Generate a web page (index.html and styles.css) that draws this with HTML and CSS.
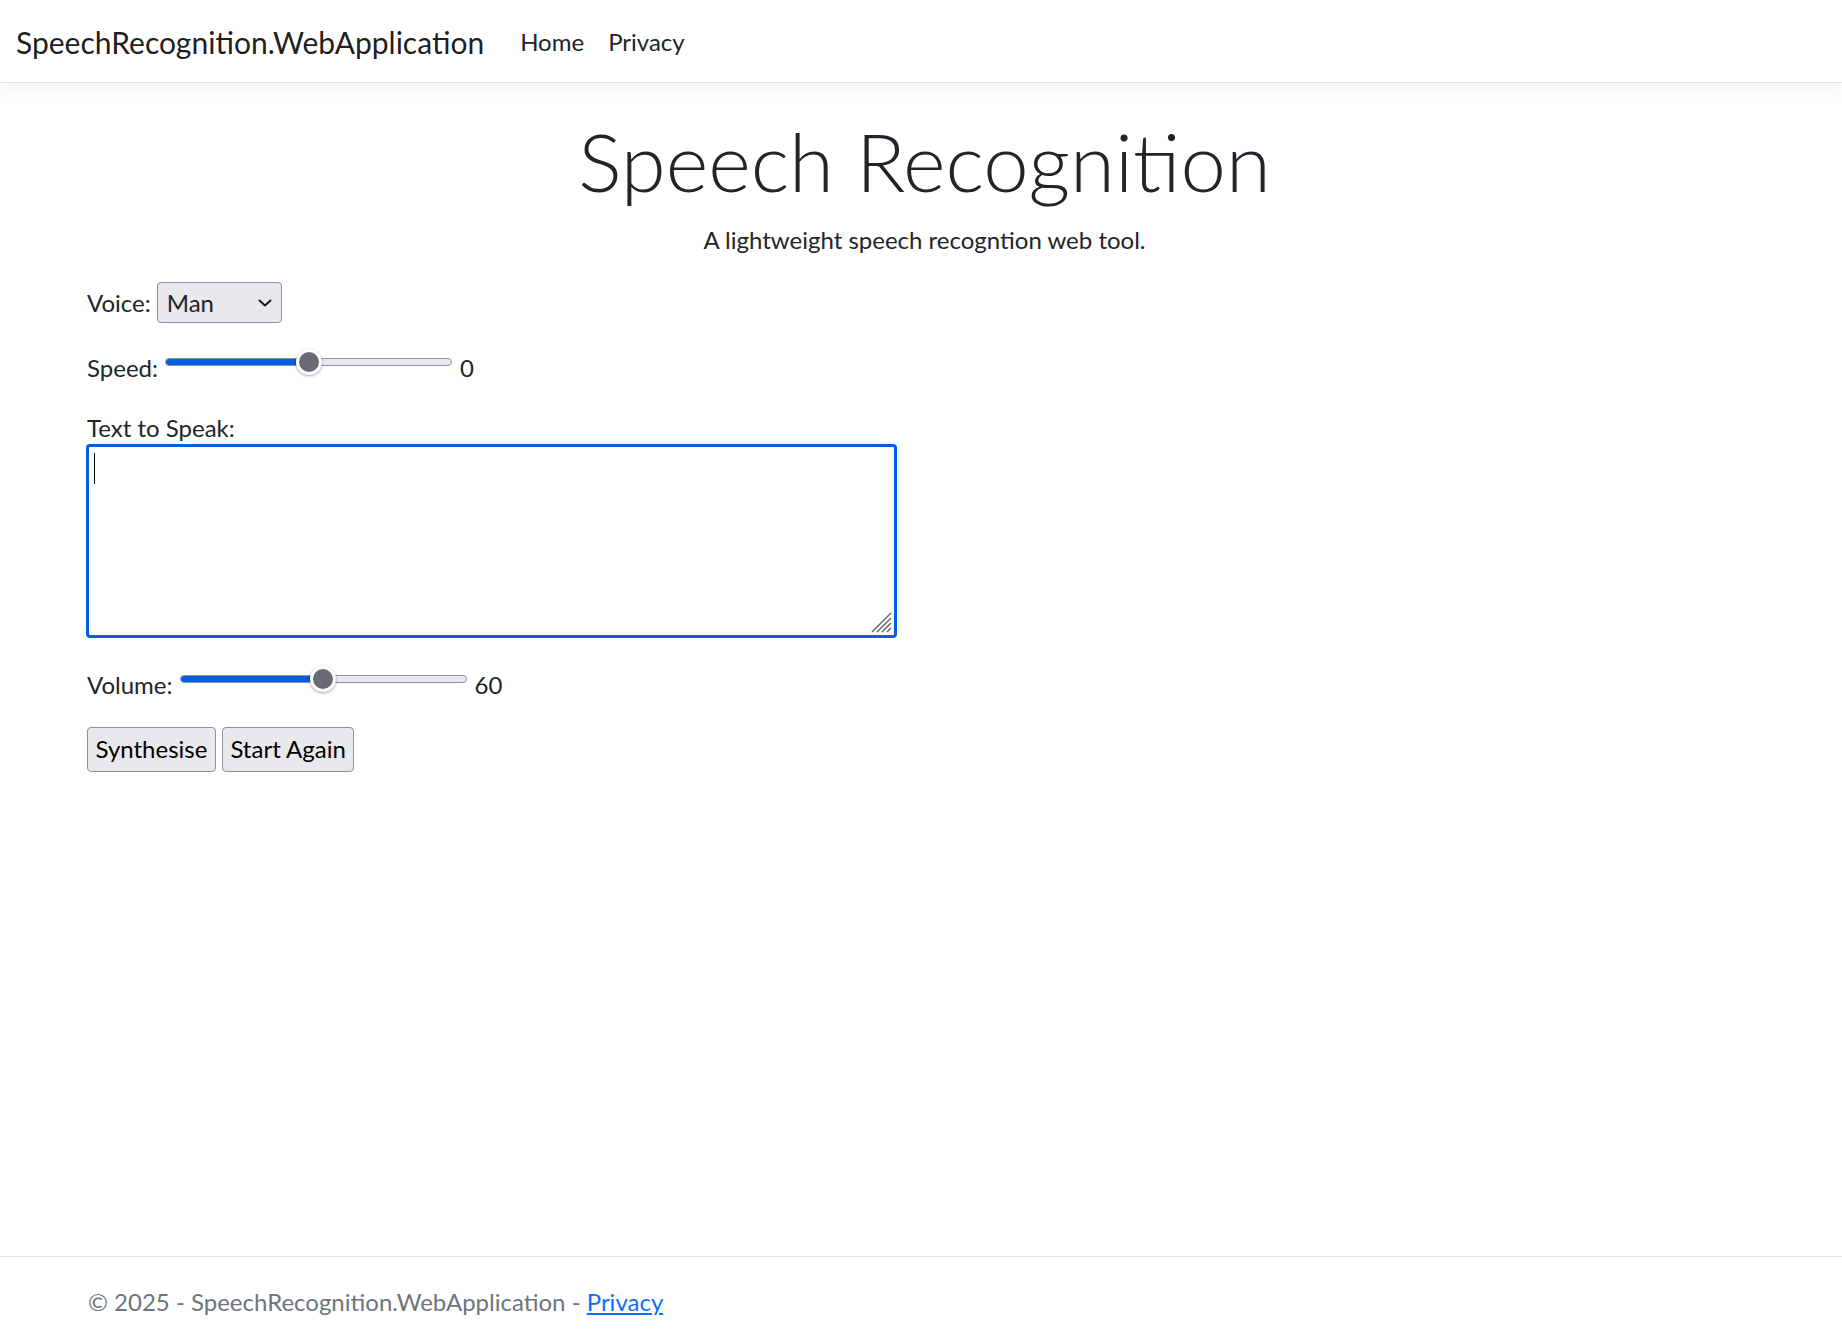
FILE: index.html
```html
<!DOCTYPE html>
<html lang="en">
<head>
<meta charset="utf-8">
<title>Speech Recognition - SpeechRecognition.WebApplication</title>
<link rel="stylesheet" href="styles.css">
</head>
<body>
<header>
  <nav class="navbar">
    <a class="brand" href="#">SpeechRecognition.WebApplication</a>
    <ul class="nav">
      <li><a class="nav-link" href="#">Home</a></li>
      <li><a class="nav-link" href="#">Privacy</a></li>
    </ul>
  </nav>
</header>
<main>
  <div class="hero">
    <h1 class="title">Speech Recognition</h1>
    <p class="lead">A lightweight speech recogntion web tool.</p>
  </div>
  <div class="row">
    <span>Voice:</span>
    <div class="select"><span>Man</span><svg class="chev" width="14" height="8" viewBox="0 0 14 8"><path d="M1.5 1.5 L7 6.5 L12.5 1.5" fill="none" stroke="#1b1b1b" stroke-width="2" stroke-linecap="round" stroke-linejoin="round"/></svg></div>
  </div>
  <div class="row">
    <span>Speed:</span>
    <div class="range" style="--v:0.5"><div class="track"><div class="fill"></div></div><div class="thumb"></div></div>
    <span>0</span>
  </div>
  <div class="label">Text to Speak:</div>
  <div class="textarea"><span class="caret"></span><svg class="grip" width="22" height="22" viewBox="0 0 22 22"><path d="M21 2 L2 21 M21 7 L7 21 M21 12 L12 21 M21 17 L17 21" stroke="#6e6e6e" stroke-width="1.6"/></svg></div>
  <div class="row vol">
    <span>Volume:</span>
    <div class="range" style="--v:0.5"><div class="track"><div class="fill"></div></div><div class="thumb"></div></div>
    <span>60</span>
  </div>
  <div class="buttons">
    <button class="btn">Synthesise</button>
    <button class="btn">Start Again</button>
  </div>
</main>
<footer class="footer">© 2025 - SpeechRecognition.WebApplication - <a href="#">Privacy</a></footer>
</body>
</html>
```
FILE: styles.css
```css
* { box-sizing: border-box; }
html, body { margin: 0; }
body {
  font-family: "Lato", "Segoe UI", sans-serif;
  font-size: 24px;
  line-height: 36px;
  color: #212529;
  background: #fff;
  display: flex;
  flex-direction: column;
  min-height: 1347px;
}
.navbar {
  height: 83px;
  border-bottom: 1px solid #dee2e6;
  box-shadow: 0 6px 18px rgba(0,0,0,.05);
  display: flex;
  align-items: center;
  padding: 2px 18px 0 16px;
  background: #fff;
}
.brand {
  font-size: 30px;
  line-height: 45px;
  color: rgba(0,0,0,.9);
  text-decoration: none;
  margin-right: 24px;
}
.nav { display: flex; list-style: none; margin: 0; padding: 0; }
.nav-link {
  display: block;
  padding: 0 12px;
  color: #212529;
  text-decoration: none;
}
main { flex: 1; padding: 0 80px 0 87px; }
.hero { text-align: center; }
.title {
  font-size: 81.5px;
  font-weight: 300;
  line-height: 100px;
  margin: 28px 0 11px;
}
.lead { margin: 0; }
.row { display: flex; align-items: baseline; margin-top: 24px; }
.select {
  display: flex;
  align-items: center;
  justify-content: space-between;
  width: 125px;
  height: 41px;
  line-height: 39px;
  margin-left: 6px;
  padding: 0 9px 0 9px;
  background: #e9e9ed;
  border: 1px solid #8f8f9d;
  border-radius: 4px;
}
.range {
  position: relative;
  width: 287px;
  height: 30px;
  margin: 0 8px 0 7px;
}
.track {
  position: absolute;
  left: 0; right: 0; top: 11px;
  height: 8px;
  background: #e9e9ed;
  border: 1px solid #8f8f9d;
  border-radius: 4px;
  overflow: hidden;
}
.fill {
  height: 100%;
  width: calc(13px + (100% - 26px) * var(--v));
  background: #0060df;
}
.thumb {
  position: absolute;
  top: 2px;
  left: calc(13px + (100% - 26px) * var(--v));
  width: 26px;
  height: 26px;
  margin-left: -13px;
  border-radius: 50%;
  background: #6a6a76;
  border: 3px solid #fff;
  box-shadow: 0 1px 3px rgba(0,0,0,.35);
}
.label { margin-top: 25px; line-height: 33px; }
.textarea {
  position: relative;
  width: 811px;
  height: 194px;
  margin-left: -1px;
  border: 3px solid #0060df;
  border-radius: 4px;
  padding: 6px 0 0 5px;
}
.caret { display: block; width: 1px; height: 31px; background: #000; }
.grip { position: absolute; right: 2px; bottom: 2px; }
.vol { margin-top: 26px; }
.buttons { display: flex; gap: 6px; margin-top: 24px; }
.btn {
  font: inherit;
  color: #000;
  line-height: 36px;
  height: 45px;
  padding: 3px 7.5px 4px;
  background: #e9e9ed;
  border: 1px solid #8f8f9d;
  border-radius: 4px;
}
.footer {
  border-top: 1px solid #dee2e6;
  line-height: 90px;
  padding-left: 88px;
  color: #6c757d;
  white-space: nowrap;
}
.footer a { color: #0d6efd; }
```
